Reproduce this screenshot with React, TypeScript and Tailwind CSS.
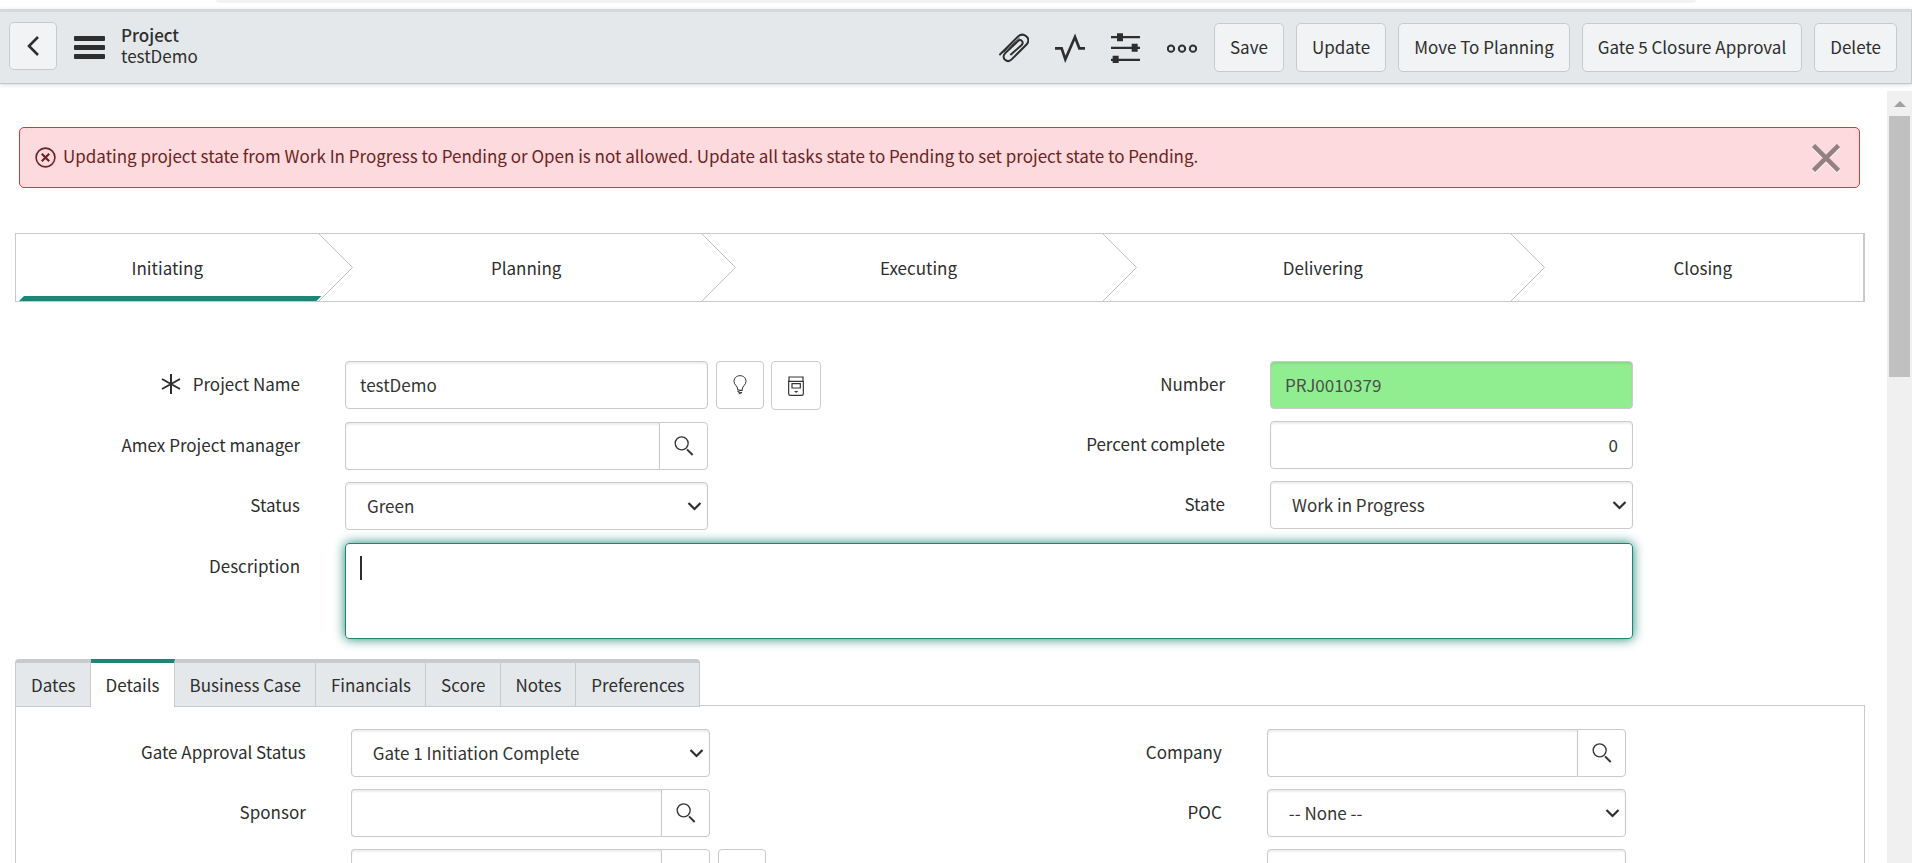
import { useState } from "react";
import type { ReactNode, SelectHTMLAttributes } from "react";
import clsx from "clsx";

const STAGES = ["Initiating", "Planning", "Executing", "Delivering", "Closing"];
const TABS = ["Dates", "Details", "Business Case", "Financials", "Score", "Notes", "Preferences"];
const ACTIONS = ["Save", "Update", "Move To Planning", "Gate 5 Closure Approval", "Delete"];

const control =
  "h-12 w-full min-w-0 rounded-[4px] border border-[#c9cacb] bg-white text-[#343434] shadow-[inset_0_2px_2px_rgba(0,0,0,0.07)] outline-none";
const addon =
  "flex shrink-0 items-center justify-center border border-[#c9cacb] bg-white text-[#343434]";

function PaperclipIcon() {
  return (
    <svg className="h-[30px] w-[30px]" viewBox="0 0 90 90" fill="none" stroke="currentColor" strokeWidth="6">
      <path d="M1 66 L58 10 C73 -3 97 14 84 33 L38 79 C25 92 5 76 18 61 L57 24 C65 17 76 26 68 36 L34 66" />
      <path d="M14 58 L62 15" strokeWidth="3" />
    </svg>
  );
}

function PulseIcon() {
  return (
    <svg className="h-[30px] w-[30px]" viewBox="0 0 90 90" fill="none" stroke="currentColor" strokeWidth="8">
      <path d="M0 46 H20 L31 79 L60 12 L73 46 H90" />
    </svg>
  );
}

function SlidersIcon() {
  return (
    <svg className="h-[30px] w-[30px]" viewBox="0 0 90 90" fill="currentColor">
      <path d="M0 9h87v7H0zM0 41h87v7H0zM0 77h87v7H0z" />
      <path d="M18 1h18v24H18zM62 32h18v24H62zM5 68h18v22H5z" />
    </svg>
  );
}

function MoreIcon() {
  return (
    <svg className="h-[30px] w-[30px]" viewBox="0 0 90 90" fill="none" stroke="currentColor" strokeWidth="6">
      <circle cx="12" cy="47" r="9.5" />
      <circle cx="45" cy="47" r="9.5" />
      <circle cx="78" cy="47" r="9.5" />
    </svg>
  );
}

function SearchIcon() {
  return (
    <svg className="size-5" viewBox="0 0 60 60" fill="none" stroke="currentColor" strokeWidth="4">
      <circle cx="23" cy="22" r="19.5" />
      <path d="M39 40 L56 57" strokeWidth="6" />
    </svg>
  );
}

function BulbIcon() {
  return (
    <svg className="size-5" viewBox="0 0 60 60" fill="none" stroke="currentColor" strokeWidth="3">
      <path d="M23 43 C23 32 12 30 12 19 C12 9 20 2 30 2 C40 2 48 9 48 19 C48 30 37 32 37 43" />
      <path d="M21 44 L38 47 M22 50 L38 44 M24 51 L36 54 M26 57 L36 52" />
    </svg>
  );
}

function DrawerIcon() {
  return (
    <svg className="size-5" viewBox="0 0 60 60" fill="none" stroke="currentColor" strokeWidth="3.5">
      <path d="M7 3 H53 M9 3 V16 M51 3 V16 M6 16 H53" />
      <path d="M8 16 V53 Q8 58 13 58 H47 Q52 58 52 53 V16" />
      <path d="M18 23 H43 V36 H18z" />
      <path d="M24 45 H37 L30.5 51z" fill="currentColor" stroke="none" />
    </svg>
  );
}

function RequiredIcon() {
  return (
    <svg className="mr-3 size-5 shrink-0" viewBox="0 0 20 20" fill="none" stroke="currentColor" strokeWidth="2">
      <path d="M10 0 V20 M1 5 L19 15 M19 5 L1 15" />
    </svg>
  );
}

interface FieldProps {
  id: string;
  label: string;
  required?: boolean;
  extra?: ReactNode;
  wide?: boolean;
  children: ReactNode;
}

function Field({ id, label, required, extra, wide, children }: FieldProps) {
  return (
    <div className={clsx("grid", wide ? "grid-cols-[330fr_1288fr_232fr]" : "grid-cols-[330fr_363fr_232fr]")}>
      <label htmlFor={id} className="flex h-12 items-center justify-end pr-[45px] pb-[2px] whitespace-nowrap">
        {required && <RequiredIcon />}
        {label}
      </label>
      <div className="min-w-0">{children}</div>
      <div className="flex items-start gap-[7px] pl-2">{extra}</div>
    </div>
  );
}

function Select({ children, ...props }: SelectHTMLAttributes<HTMLSelectElement>) {
  return (
    <div className="relative">
      <select {...props} className={clsx(control, "appearance-none pr-8 pl-[21px]")}>
        {children}
      </select>
      <svg
        className="pointer-events-none absolute top-5 right-[6px] h-[9px] w-[15px]"
        viewBox="0 0 15 9"
        fill="none"
        stroke="currentColor"
        strokeWidth="2.2"
      >
        <path d="M1.5 1 L7.5 7 L13.5 1" />
      </svg>
    </div>
  );
}

function Reference({ id, label }: { id: string; label: string }) {
  return (
    <div className="flex">
      <input id={id} type="text" className={clsx(control, "rounded-r-none border-r-0 px-[14px] pb-[2px]")} />
      <button type="button" aria-label={`Lookup ${label}`} className={clsx(addon, "h-12 w-[49px] rounded-r-[4px]")}>
        <SearchIcon />
      </button>
    </div>
  );
}

function Header() {
  return (
    <header className="relative z-10 flex h-[75px] shrink-0 items-center border-t-[3px] border-r border-b border-t-[#d6d8da] border-r-[#c9cacb] border-b-[#c3c5c7] bg-[#e4e8eb] pr-[14px] pl-[9px] shadow-[0_1px_4px_rgba(0,0,0,0.15)]">
      <button
        type="button"
        aria-label="Back"
        className="mb-[3px] flex size-12 items-center justify-center rounded-[5px] border border-[#c9cacb] bg-[#f1f3f5]"
      >
        <svg className="h-5 w-3" viewBox="0 0 12 20" fill="none" stroke="currentColor" strokeWidth="2.6">
          <path d="M11 1 L2 10 L11 19" />
        </svg>
      </button>
      <button type="button" aria-label="Additional actions" className="ml-[17px] flex w-[31px] flex-col gap-1">
        <span className="h-[5px] rounded-[1px] bg-[#2e2e2e]" />
        <span className="h-[5px] rounded-[1px] bg-[#2e2e2e]" />
        <span className="h-[5px] rounded-[1px] bg-[#2e2e2e]" />
      </button>
      <h1 className="ml-4 pb-[6px] leading-[21px]">
        <span className="block font-medium">Project</span>
        <span className="block">testDemo</span>
      </h1>
      <div className="ml-auto flex items-center gap-[26px]">
        <button type="button" aria-label="Manage attachments"><PaperclipIcon /></button>
        <button type="button" aria-label="Activity stream"><PulseIcon /></button>
        <button type="button" aria-label="Personalize form"><SlidersIcon /></button>
        <button type="button" aria-label="More options"><MoreIcon /></button>
      </div>
      <div className="ml-[17px] flex gap-3">
        {ACTIONS.map((action) => (
          <button
            key={action}
            type="button"
            className="h-[49px] rounded-[5px] border border-[#c9cacb] bg-[#f1f3f5] px-[15px] pb-[2px] whitespace-nowrap"
          >
            {action}
          </button>
        ))}
      </div>
    </header>
  );
}

function Alert() {
  return (
    <div
      role="alert"
      className="mr-[5px] ml-1 flex h-[61px] items-center rounded-[5px] border border-[#cf3a3a] bg-[#fddadd] pr-[19px] pl-[15px] text-[#6b2423]"
    >
      <svg className="size-[21px] shrink-0" viewBox="0 0 21 21" fill="none" stroke="currentColor" strokeWidth="1.6">
        <circle cx="10.5" cy="10.5" r="9.4" />
        <path d="M6.8 6.8 L14.2 14.2 M14.2 6.8 L6.8 14.2" strokeWidth="2.2" />
      </svg>
      <span className="ml-[7px] pb-1">
        Updating project state from Work In Progress to Pending or Open is not allowed. Update all tasks state to
        Pending to set project state to Pending.
      </span>
      <button type="button" aria-label="Close message" className="ml-auto text-[#958080] drop-shadow-[0_1px_0_#fff]">
        <svg className="size-7" viewBox="0 0 28 28" fill="none" stroke="currentColor" strokeWidth="4.6">
          <path d="M1.5 1.5 L26.5 26.5 M26.5 1.5 L1.5 26.5" />
        </svg>
      </button>
    </div>
  );
}

function Stages() {
  return (
    <ol className="mt-[45px] grid h-[69px] grid-cols-[303fr_384fr_402fr_408fr_353fr] border border-r-2 border-[#c9cacb]">
      {STAGES.map((stage, i) => (
        <li key={stage} className={clsx("relative flex items-center justify-center", i > 0 && "pl-8")}>
          {stage}
          {i === 0 && (
            <svg
              className="absolute bottom-0 left-[3px] h-[5px] w-full text-[#1f8476]"
              viewBox="0 0 304 5"
              preserveAspectRatio="none"
              fill="currentColor"
            >
              <path d="M0 5 L5 0 H304 L299 5z" />
            </svg>
          )}
          {i < STAGES.length - 1 && (
            <svg
              className="absolute top-0 left-full h-[67px] w-[35px] text-[#c0c1c2]"
              viewBox="0 0 35 67"
              fill="none"
              stroke="currentColor"
            >
              <path d="M0 0 L33.5 33.5 L0 67" />
            </svg>
          )}
        </li>
      ))}
    </ol>
  );
}

function Scrollbar() {
  return (
    <div aria-hidden="true" className="mt-[7px] flex w-[25px] shrink-0 flex-col items-center bg-[#f0f0f0]">
      <svg className="mt-[10px] h-[6px] w-3" viewBox="0 0 12 6" fill="#a0a0a0">
        <path d="M6 0 L12 6 H0z" />
      </svg>
      <div className="mt-[9px] h-[261px] w-[21px] bg-[#c0c0c0]" />
    </div>
  );
}

export default function App() {
  const [activeTab, setActiveTab] = useState("Details");

  return (
    <div className="flex h-screen flex-col overflow-hidden bg-white font-['Noto_Sans_CJK_SC',sans-serif] text-[17px] leading-6 text-[#2e2e2e]">
      {/* bottom edge of the address bar */}
      <div className="h-[9px] shrink-0 px-[216px]">
        <div className="h-[3px] rounded-b-[12px] bg-[#f1f3f4]" />
      </div>
      <Header />

      <div className="flex min-h-0 flex-1">
        <main className="min-w-0 flex-1 overflow-hidden pt-[43px] pr-[22px] pl-[15px]">
          <Alert />
          <Stages />

          <form className="mt-[59px]">
            <div className="grid grid-cols-2">
              <div className="flex flex-col gap-3">
                <Field
                  id="name"
                  label="Project Name"
                  required
                  extra={
                    <>
                      <button type="button" aria-label="Suggestions" className={clsx(addon, "size-12 rounded-[4px]")}>
                        <BulbIcon />
                      </button>
                      <button
                        type="button"
                        aria-label="Open project workbench"
                        className={clsx(addon, "h-[49px] w-[50px] rounded-[4px]")}
                      >
                        <DrawerIcon />
                      </button>
                    </>
                  }
                >
                  <input id="name" type="text" defaultValue="testDemo" className={clsx(control, "px-[14px] pb-[2px]")} />
                </Field>
                <Field id="manager" label="Amex Project manager">
                  <Reference id="manager" label="Amex Project manager" />
                </Field>
                <Field id="status" label="Status">
                  <Select id="status">
                    <option>Green</option>
                  </Select>
                </Field>
              </div>
              <div className="flex flex-col gap-3">
                <Field id="number" label="Number">
                  <input
                    id="number"
                    type="text"
                    readOnly
                    defaultValue="PRJ0010379"
                    className="h-12 w-full min-w-0 rounded-[4px] border border-[#c9cacb] bg-[#90ee90] px-[14px] pb-[2px] text-[#4a4f4a] shadow-[inset_0_2px_2px_rgba(0,0,0,0.07)] outline-none"
                  />
                </Field>
                <Field id="percent" label="Percent complete">
                  <input
                    id="percent"
                    type="text"
                    defaultValue="0"
                    className={clsx(control, "px-[14px] pb-[2px] text-right")}
                  />
                </Field>
                <Field id="state" label="State">
                  <Select id="state">
                    <option>Work in Progress</option>
                  </Select>
                </Field>
              </div>
            </div>

            <div className="mt-[13px]">
              <Field id="description" label="Description" wide>
                <div className="relative">
                  <textarea
                    id="description"
                    className="block h-24 w-full resize-none rounded-[4px] border border-[#1f8476] px-[14px] py-3 caret-transparent shadow-[0_0_12px_#1f8476] outline-none"
                  />
                  <span className="absolute top-[13px] left-[15px] h-6 w-[2px] bg-[#2e2e2e]" />
                </div>
              </Field>
            </div>

            <div role="tablist" className="relative z-10 mt-5 flex h-12">
              {TABS.map((tab, i) => (
                <button
                  key={tab}
                  type="button"
                  role="tab"
                  aria-selected={tab === activeTab}
                  onClick={() => setActiveTab(tab)}
                  className={clsx(
                    "border-t-4 border-r border-r-[#c9cacb] pr-[14px] pl-[15px] whitespace-nowrap",
                    i === 0 && "rounded-tl-[4px] border-l border-l-[#c9cacb]",
                    i === TABS.length - 1 && "rounded-tr-[4px]",
                    tab === activeTab
                      ? "border-t-[#1f8476] bg-white pb-px"
                      : "border-b border-t-[#c9cacb] border-b-[#c9cacb] bg-[#e4e8eb]"
                  )}
                >
                  {tab}
                </button>
              ))}
            </div>

            <div role="tabpanel" className="-mt-[2px] grid grid-cols-2 border border-[#c9cacb] px-2 pt-[23px] pb-6">
              <div className="flex flex-col gap-3">
                <Field id="gate" label="Gate Approval Status">
                  <Select id="gate">
                    <option>Gate 1 Initiation Complete</option>
                  </Select>
                </Field>
                <Field id="sponsor" label="Sponsor">
                  <Reference id="sponsor" label="Sponsor" />
                </Field>
                {/* label of this row sits below the fold */}
                <Field
                  id="portfolio"
                  label=""
                  extra={<button type="button" aria-label="Preview record" className={clsx(addon, "size-12 rounded-[4px]")} />}
                >
                  <div className="flex">
                    <input id="portfolio" type="text" aria-label="Reference" className={clsx(control, "rounded-r-none border-r-0")} />
                    <button type="button" aria-label="Lookup" className={clsx(addon, "h-12 w-[49px] rounded-r-[4px]")} />
                  </div>
                </Field>
              </div>
              <div className="flex flex-col gap-3">
                <Field id="company" label="Company">
                  <Reference id="company" label="Company" />
                </Field>
                <Field id="poc" label="POC">
                  <Select id="poc">
                    <option>-- None --</option>
                  </Select>
                </Field>
                <Field id="other" label="">
                  <input id="other" type="text" aria-label="Value" className={control} />
                </Field>
              </div>
            </div>
          </form>
        </main>
        <Scrollbar />
      </div>
    </div>
  );
}
